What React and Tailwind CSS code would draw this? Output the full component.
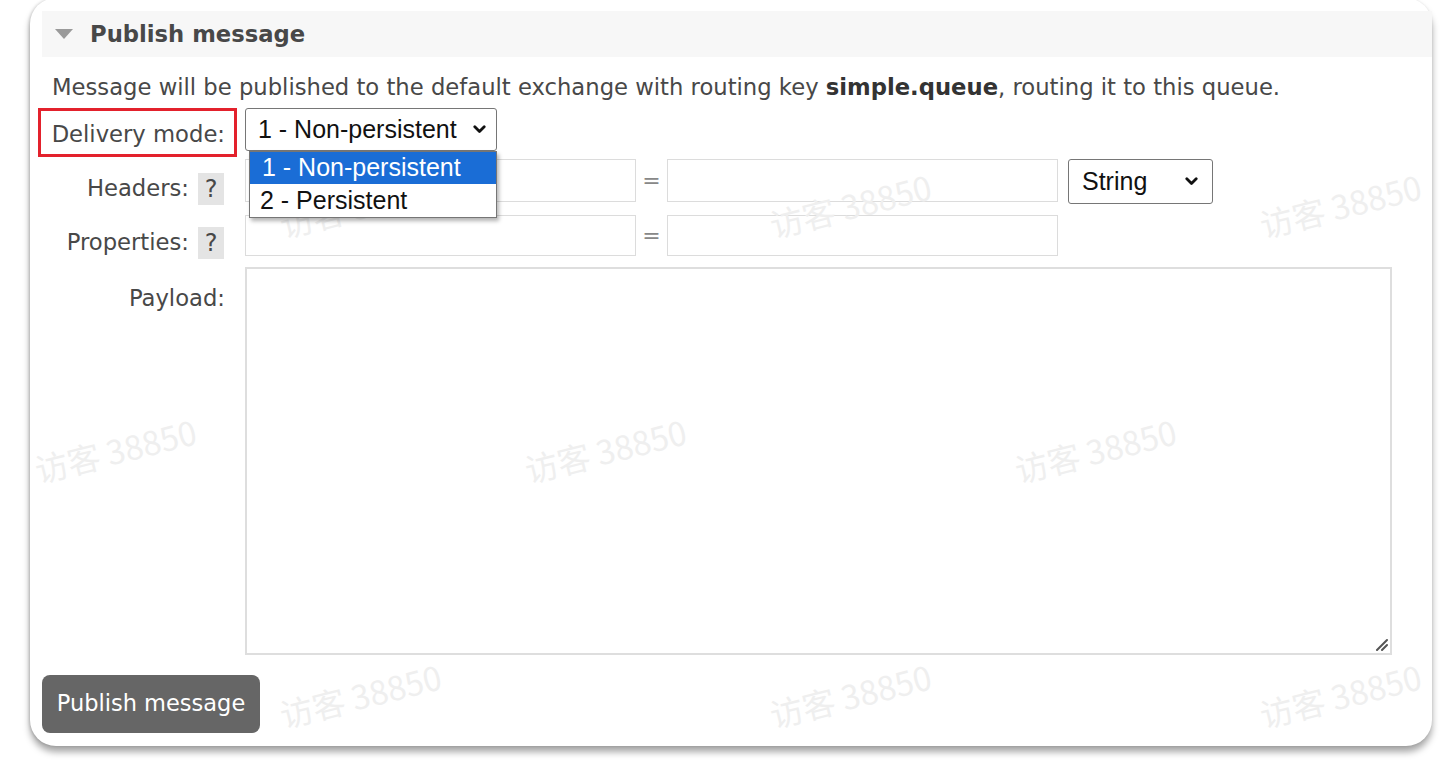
import React from "react";

const wmPositions = [
  [360, 205], [850, 205], [1340, 205],
  [115, 450], [605, 450], [1095, 450],
  [360, 695], [850, 695], [1340, 695],
];

const arial = { fontFamily: '"Liberation Sans", Arial, sans-serif' };

function Chevron() {
  return (
    <svg width="13" height="9" viewBox="0 0 13 9" className="shrink-0">
      <path d="M1.8 1.8 L6.5 6.5 L11.2 1.8" fill="none" stroke="#111" strokeWidth="2.8" strokeLinecap="round" strokeLinejoin="round" />
    </svg>
  );
}

function Help() {
  return (
    <span className="ml-[9px] inline-flex h-[32px] w-[26px] items-center justify-center bg-[#e4e4e4] text-[24px] text-[#484848]">?</span>
  );
}

export default function App() {
  return (
    <div className="relative h-[765px] w-[1445px] overflow-hidden bg-white" style={{ fontFamily: '"DejaVu Sans", Verdana, sans-serif' }}>
      <div className="relative ml-[30px] mt-[-2px] h-[748px] w-[1402px] rounded-[26px] bg-white pt-[13px] shadow-[0_6px_7px_rgba(0,0,0,0.35),-1px_0_3px_rgba(0,0,0,0.15)]">
        {/* Header */}
        <div className="ml-[12px] flex h-[46px] items-center bg-[#f7f7f7] pl-[13px]">
          <svg width="18" height="11" viewBox="0 0 18 11" className="mr-[17px]">
            <path d="M0 0 L18 0 L9 10 Z" fill="#9a9a9a" />
          </svg>
          <span className="text-[22.7px] font-bold text-[#484848]">Publish message</span>
        </div>

        <div className="mt-[16px] pl-[22px] text-[22.7px] leading-[28px] text-[#484848]">
          Message will be published to the default exchange with routing key <b className="text-[#333]">simple.queue</b>, routing it to this queue.
        </div>

        {/* Delivery mode row */}
        <div className="mt-[7px] flex items-start pl-[8px]">
          <div className="flex h-[49px] w-[199px] items-center justify-end border-[3px] border-[#e3212c] pr-[9px] pt-[4px] text-[22.7px] text-[#484848]">
            Delivery mode:
          </div>
          <div className="relative ml-[8px]">
            <div className="flex h-[43px] w-[252px] items-center justify-between rounded-[3px] border border-[#767676] bg-white pl-[12px] pr-[10px] text-[25px] text-[#111]" style={arial}>
              <span>1 - Non-persistent</span>
              <Chevron />
            </div>
            <div className="absolute left-[4px] top-[43px] z-20 w-[248px] border border-[#767676] bg-white text-[25px] shadow-[2px_3px_4px_rgba(0,0,0,0.3)]" style={arial}>
              <div className="flex h-[32px] items-center bg-[#1a6dd6] pl-[12px] text-white">1 - Non-persistent</div>
              <div className="flex h-[33px] items-center pl-[10px] text-[#111]">2 - Persistent</div>
            </div>
          </div>
        </div>

        {/* Headers row */}
        <div className="mt-[2px] flex items-start">
          <div className="flex h-[43px] w-[215px] items-center justify-end pr-[21px] pt-[16px] text-[22.7px] text-[#484848]">
            <span>Headers:</span>
            <Help />
          </div>
          <div className="h-[43px] w-[391px] border-[1.5px] border-[#dcdcdc]" />
          <span className="flex h-[43px] w-[31px] items-center justify-center text-[22px] text-[#888]">=</span>
          <div className="h-[43px] w-[391px] border-[1.5px] border-[#dcdcdc]" />
          <div className="ml-[10px] flex h-[45px] w-[145px] items-center justify-between rounded-[3px] border border-[#767676] pl-[13px] pr-[14px] text-[25px] text-[#111]" style={arial}>
            <span>String</span>
            <Chevron />
          </div>
        </div>

        {/* Properties row */}
        <div className="mt-[11px] flex items-start">
          <div className="flex h-[41px] w-[215px] items-center justify-end pr-[21px] pt-[14px] text-[22.7px] text-[#484848]">
            <span>Properties:</span>
            <Help />
          </div>
          <div className="h-[41px] w-[391px] border-[1.5px] border-[#dcdcdc]" />
          <span className="flex h-[41px] w-[31px] items-center justify-center text-[22px] text-[#888]">=</span>
          <div className="h-[41px] w-[391px] border-[1.5px] border-[#dcdcdc]" />
        </div>

        {/* Payload row */}
        <div className="mt-[11px] flex items-start">
          <div className="w-[195px] pt-[14px] text-right text-[22.7px] text-[#484848]">Payload:</div>
          <div className="relative ml-[20px] h-[388px] w-[1147px] border-[2px] border-[#dedede]">
            <svg width="14" height="14" viewBox="0 0 14 14" className="absolute bottom-[2px] right-[2px]">
              <path d="M3 13 L13 3 M8 13 L13 8" stroke="#555" strokeWidth="2" strokeLinecap="round" />
            </svg>
          </div>
        </div>

        {/* Button */}
        <div className="mt-[20px] pl-[12px]">
          <button className="flex h-[58px] w-[218px] items-center justify-center rounded-[8px] bg-[#666666] text-[22.5px] text-white">
            Publish message
          </button>
        </div>
      </div>

      {/* Watermarks */}
      {wmPositions.map(([x, y], i) => (
        <div
          key={i}
          className="pointer-events-none absolute z-10 whitespace-nowrap text-[33px] text-[#efefef]"
          style={{ left: x - 82, top: y - 24, transform: "rotate(-14deg)", fontFamily: '"Noto Sans CJK SC", "Noto Sans", sans-serif' }}
        >
          访客 38850
        </div>
      ))}
    </div>
  );
}
